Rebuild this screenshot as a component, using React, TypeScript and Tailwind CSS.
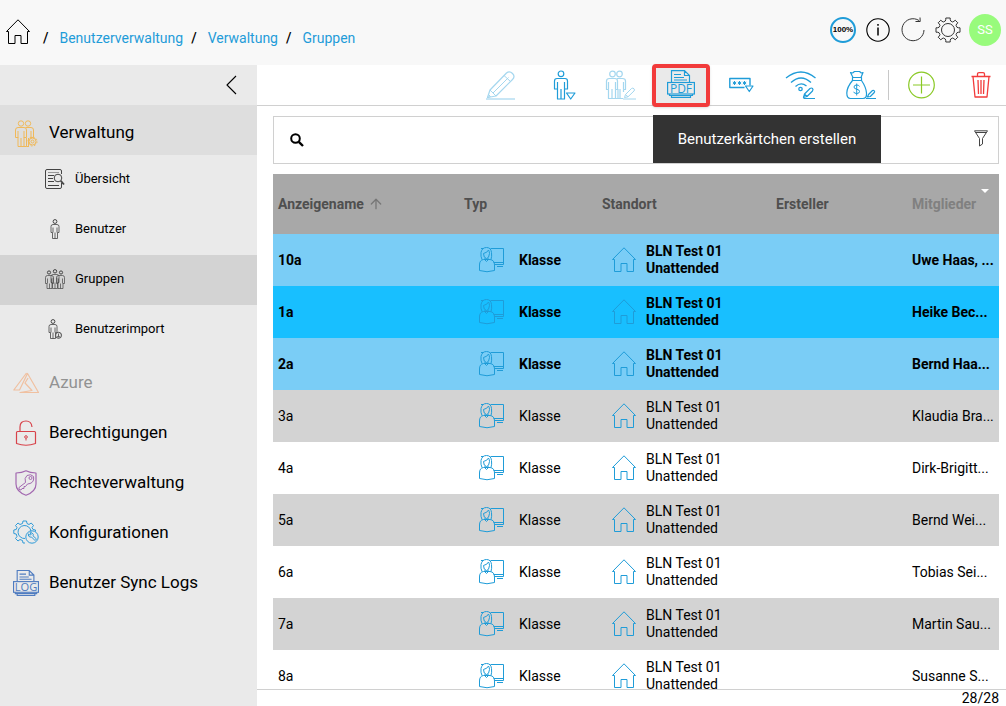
import React from "react"
import { ArrowUp } from "lucide-react"

type IconProps = { className?: string }

const Svg = ({ w, h, className = "", children }: { w: number; h: number; className?: string; children: React.ReactNode }) => (
    <svg
        width={w}
        height={h}
        viewBox={`0 0 ${w} ${h}`}
        fill="none"
        stroke="currentColor"
        strokeLinejoin="round"
        className={`shrink-0 ${className}`}
        aria-hidden="true"
    >
        {children}
    </svg>
)

const HomeIcon = ({ className }: IconProps) => (
    <Svg w={26} h={26} className={className}>
        <path d="M0.500 12.500L12 0.800L23.500 12.500H21.500V24.500H15V16.500H9V24.500H2.500V12.500Z" />
    </Svg>
)

const TeacherIcon = ({ className }: IconProps) => (
    <Svg w={26} h={26} className={className}>
        <path d="M0.500 23.500V18Q0.500 13 4.500 12.500H11Q15.500 13 15.500 18V23.500Q8 26 0.500 23.500Z" />
        <path d="M3 12.500Q1.500 9.500 2 5.500Q3 0.500 7.500 0.500Q12 0.500 12.500 5.500Q13 9.500 12 12.500" />
        <path d="M4.500 6.500Q8.500 5.500 9.500 3Q10.500 4.500 10.500 6.500Q10 11.500 7.500 11.500Q4.500 11 4.500 6.500ZM6 11V13L7.500 14.500L9 13V11" />
        <path d="M11.500 1.500H24.500V17.500H15.500M14.500 15.500H24.500M18 19.500H24M2 1.500H4" />
    </Svg>
)

const PencilIcon = ({ className }: IconProps) => (
    <Svg w={30} h={30} className={className}>
        <path d="M1.500 27.500L4 20L20.500 3Q23.500 0.500 26.500 3.500Q29.500 6.500 26.500 9.500L10 26Z" strokeWidth="1.200" />
        <path d="M4 20L10 26M7 23L22.500 7.500M18 5.500L24.500 11.500M1.500 27.500L4.500 26.500L2.500 24.500" />
        <path d="M0 29H29" strokeWidth="1.200" />
    </Svg>
)

const UserDownIcon = () => (
    <Svg w={28} h={30}>
        <circle cx="12" cy="3.800" r="2.800" strokeWidth="1.200" />
        <path d="M8 8.500H16Q18.500 8.500 18.500 11V19H15.500V29H8.500V19H5.500V11Q5.500 8.500 8 8.500ZM12 19V29M8.500 12V19M15.500 12V19" strokeWidth="1.200" />
        <path d="M17.500 23H26L21.700 29Z" className="fill-white" strokeWidth="1.200" />
    </Svg>
)

const Pair = () => (
    <>
        <circle cx="7" cy="3.500" r="2.700" />
        <circle cx="14" cy="3.500" r="2.700" />
        <path d="M4 7.500H10Q12.500 7.500 12.500 10V17.500H10V26.500H4V17.500H1.500V10Q1.500 7.500 4 7.500ZM7 18V26.500M4 11V18M10 11V18" />
        <path d="M11.500 7.500H17Q19.500 7.500 19.500 10V17.500H17V19M12.500 18V26.500H10M14.500 18V26.500M17 11V18M12.500 26.500H15" />
    </>
)

const GroupEditIcon = ({ className }: IconProps) => (
    <Svg w={32} h={30} className={className}>
        <path d="M4.500 8.500H10Q12.500 8.500 12.500 11V19.500H10.500V28.500H3.500V19.500H1.500V11Q1.500 8.500 4.500 8.500ZM7 19V28.500M3.500 12V19M10.500 12V19" strokeWidth="1.200" />
        <path d="M12 8.500H17.500Q20.500 8.500 20.500 11V19.500H18.500V22M13 19V28.500M15 19V28.500H10.500M18.500 12V19M15 28.500H18" strokeWidth="1.200" />
        <circle cx="7.500" cy="4" r="2.800" strokeWidth="1.200" />
        <circle cx="14.500" cy="4" r="2.800" strokeWidth="1.200" />
        <path d="M19.500 27.500L20.500 24.500L26.500 18.500Q28 17.500 29 18.800Q30 20 29 21L23 26.800ZM20.500 24.500L23 26.800M18 29H31" />
    </Svg>
)

const PrintIcon = ({ label, size, className = "" }: { label: string; size: number; className?: string }) => (
    <svg width={size} height={size} viewBox="0 0 28 28" fill="none" stroke="currentColor" strokeWidth="1.200" className={`shrink-0 ${className}`} aria-hidden="true">
        <path d="M4.500 12V0.600H17.500L22.500 5.500V12M17.500 0.600V5.500H22.500M7 4.500H14M7 7.500H17M7 10H20" />
        <rect x="0.600" y="12.500" width="26.800" height="11.500" />
        <path d="M2.500 24V25.500H25.500V24M4.500 25.500V27.400H23.500V25.500" />
        <text x="14" y="22.700" fontSize="12" textAnchor="middle" fill="currentColor" stroke="none" fontFamily="Open Sans, sans-serif">
            {label}
        </text>
    </svg>
)

const PasswordIcon = () => (
    <Svg w={25} h={16}>
        <path d="M15.500 10.500H0.800V1.500H21V8.500" strokeWidth="1.400" />
        <path d="M5.500 4V8M3.800 5L7.200 7M7.200 5L3.800 7M10.500 4V8M8.800 5L12.200 7M12.200 5L8.800 7M15.500 4V8M13.800 5L17.200 7M17.200 5L13.800 7" />
        <path d="M16.500 9H24L20.300 14.500Z" strokeWidth="1.200" />
    </Svg>
)

const WifiEditIcon = () => (
    <Svg w={32} h={30}>
        <path d="M1 8Q16 -4 30.500 8M6 12.500Q16 3.500 26 12.500M10.500 16.500Q16 11.500 21.500 16" strokeWidth="1.300" />
        <circle cx="15.500" cy="19" r="1.700" strokeWidth="1.300" />
        <path d="M18.500 27.500L19.500 24L25 18.500Q26.500 17.500 27.500 18.500Q28.500 19.500 27.500 21L22 26.500ZM19.500 24L22 26.500M18.500 28.500H30" strokeWidth="1.200" />
    </Svg>
)

const MoneyBagIcon = () => (
    <Svg w={31} h={30}>
        <path
            d="M7 7.500L4.500 2.500Q8 3.500 8 1.500H14Q14 3.500 17 2.500L15 7.500M6.500 7.500H15.500V10.500H6.500ZM6.500 10.500Q1 17 0.800 23Q0.800 28.500 4.500 28.500H17Q21 28.500 20.500 23Q20 17 15.500 10.500"
            strokeWidth="1.200"
        />
        <path d="M13.500 16.500Q13 15 10.700 15Q8 15 8 17Q8 18.800 10.700 19.200Q13.500 19.600 13.500 21.500Q13.500 23.500 10.700 23.500Q8 23.500 7.700 21.800M10.700 13.500V25.500" />
        <path d="M21.500 27L22.500 24.500L26.500 20.500Q27.500 20 28.300 20.800Q29 21.600 28.300 22.500L24.300 26.500ZM20 28.500H30" strokeWidth="1.200" />
    </Svg>
)

const PlusIcon = () => (
    <Svg w={28} h={28}>
        <circle cx="13.500" cy="14" r="12.800" strokeWidth="1.200" />
        <path d="M5 14H22M13.500 5.500V22.500" strokeWidth="1.200" />
    </Svg>
)

const TrashIcon = () => (
    <Svg w={20} h={26}>
        <path d="M0.500 4.500H19.500M6.500 4V2Q6.500 0.700 8 0.700H12Q13.500 0.700 13.500 2V4M2 4.500L4 25H16L18 4.500M7 8L7.500 22M10 8V22M13 8L12.500 22" strokeWidth="1.300" />
    </Svg>
)

const FilterIcon = () => (
    <Svg w={14} h={17}>
        <path d="M0.500 0.800H13.500L8.500 8.500V14L5.500 16V8.500ZM1.500 2.500H12.500" />
    </Svg>
)

const GearIcon = () => (
    <Svg w={26} h={26}>
        <circle cx="13" cy="13" r="6.500" />
        <path d="M10.300 4Q11 3 10.800 1H15.200Q15 3 15.700 4L17.700 5Q19 4.500 20.200 3.200L22.800 5.800Q21.500 7 21 8.300L22 10.300Q23 11 25 10.800V15.200Q23 15 22 15.700L21 17.700Q21.500 19 22.800 20.200L20.200 22.800Q19 21.500 17.700 21L15.700 22Q15 23 15.200 25H10.800Q11 23 10.300 22L8.300 21Q7 21.500 5.800 22.800L3.200 20.200Q4.500 19 5 17.700L4 15.700Q3 15 1 15.200V10.800Q3 11 4 10.300L5 8.300Q4.500 7 3.200 5.800L5.800 3.200Q7 4.500 8.300 5Z" />
    </Svg>
)

const InfoIcon = () => (
    <Svg w={24} h={24}>
        <circle cx="12" cy="12" r="11.200" strokeWidth="1.100" />
        <path d="M12 9.500V17.500M12 6V7.700" strokeWidth="1.500" />
    </Svg>
)

const RefreshIcon = () => (
    <Svg w={26} h={26}>
        <path d="M24 13A11 11 0 1 1 19 3.500M15.500 4.500H20.200L20 0.500" />
    </Svg>
)

const AdminIcon = () => (
    <Svg w={26} h={27} className="text-[#f0b95a]">
        <g transform="translate(1 0)">
            <Pair />
        </g>
        <circle cx="19.500" cy="21.500" r="3.500" className="fill-[#dedede]" />
        <circle cx="19.500" cy="21.500" r="1.500" />
        <circle cx="19.500" cy="21.500" r="4.500" strokeDasharray="1.800 1.700" />
    </Svg>
)

const OverviewIcon = () => (
    <Svg w={20} h={20} className="text-[#444]">
        <path d="M16.500 14V18Q16.500 19.500 15 19.500H2Q0.500 19.500 0.500 18V2Q0.500 0.500 2 0.500H15Q16.500 0.500 16.500 2V5M3 6.500H9M3 9.500H8M3 12.500H9M3 16.500H14" />
        <path d="M3 3.500H14" className="stroke-[#999]" />
        <circle cx="13" cy="9" r="3.800" />
        <path d="M15.800 11.800L19 15.500" strokeWidth="1.800" />
    </Svg>
)

const body = (x: number, y: number) =>
    `M${x - 2} ${y}H${x + 2}Q${x + 4} ${y} ${x + 4} ${y + 2}V${y + 8}H${x + 2.5}V19.500H${x - 2.5}V${y + 8}H${x - 4}V${y + 2}Q${x - 4} ${y} ${x - 2} ${y}ZM${x} ${y + 8}V19.500M${x - 2} ${y + 3}V${y + 8}M${x + 2} ${y + 3}V${y + 8}`

const UserIcon = () => (
    <Svg w={20} h={20} className="text-[#444]">
        <circle cx="10" cy="2.500" r="1.900" />
        <path d={body(10, 5.5)} strokeWidth="0.800" />
    </Svg>
)

const UsersIcon = () => (
    <Svg w={20} h={20} className="text-[#444]">
        <circle cx="4" cy="3.500" r="1.600" />
        <circle cx="16" cy="3.500" r="1.600" />
        <circle cx="10" cy="2.300" r="1.700" />
        <path d={body(4.5, 6.5)} strokeWidth="0.700" />
        <path d={body(15.5, 6.5)} strokeWidth="0.700" />
        <path d={body(10, 5.5)} strokeWidth="0.700" />
    </Svg>
)

const ImportIcon = () => (
    <Svg w={20} h={20} className="text-[#444]">
        <circle cx="8" cy="2.500" r="1.900" />
        <path d={body(8, 5.5)} strokeWidth="0.800" />
        <circle cx="13.500" cy="16.300" r="3" className="fill-[#eaeaea]" />
        <path d="M13.500 14.500V18M12 16.800L13.500 18.300L15 16.800" strokeWidth="0.800" />
    </Svg>
)

const AzureIcon = () => (
    <Svg w={26} h={22} className="text-[#f0c0a0]">
        <path d="M13.500 1L0.800 18H6.500L14.500 1.500L25.500 20.500H7L19 18.500L12 11L15 6M14.500 1.500L6.500 18" strokeWidth="1.200" />
    </Svg>
)

const LockIcon = () => (
    <Svg w={26} h={26} className="text-[#d8434b]">
        <path d="M3.500 12.500V23.500Q13 27 22.500 23.500V12.500Q22.500 11.500 21.500 11.500H4.500Q3.500 11.500 3.500 12.500ZM7 11.500V7Q7 1 13 1Q18.500 1 19 7" strokeWidth="1.200" />
        <circle cx="13" cy="17" r="1.300" />
        <path d="M13 18.500V20.500" />
    </Svg>
)

const ShieldKeyIcon = () => (
    <Svg w={26} h={26} className="text-[#a268b0]">
        <path d="M13 0.800Q17 3 23 3V14Q23 21.500 13 25.300Q3 21.500 3 14V3Q9 3 13 0.800Z" strokeWidth="1.200" />
        <path d="M12.500 12.500Q11 8 14 5.500Q18 3.500 20.500 6.500Q21.500 12 17 13.500L14.500 14L12.500 16.500L11 16.500V18.500L9 18.500L8 20L6 19.500V17.500Z" />
        <circle cx="17.500" cy="8" r="1.500" />
    </Svg>
)

const ConfigIcon = () => (
    <Svg w={26} h={26} className="text-[#2f9bd8]">
        <path d="M12 18.500A6.500 6.500 0 1 1 18 11.500M12 23H10L9.500 20.500L7 19.500L5 21L2.500 18.500L4 16.500L3.200 14L0.800 13.500V10L3.200 9.500L4 7.500L2.500 5.500L5 3L7 4.500L9.500 3.500L10 1H13.500L14 3.500L16 4.500L18.200 3L20.500 5.500L19 7.500L20 9.500L22.500 10V11.500" />
        <circle cx="19" cy="17" r="6.200" />
        <path d="M22 20.500L18.500 17Q17 17.500 15.800 16.300Q15 15 15.500 13.800L17 15.300L18.300 14L16.800 12.800Q19.500 12.200 20.300 14.300L20 15.800L23.500 19Z" />
    </Svg>
)

const tools = [
    { label: "Bearbeiten", icon: <PencilIcon />, style: "w-[60px] opacity-40" },
    { label: "Benutzer zuweisen", icon: <UserDownIcon />, style: "w-[60px] pl-1" },
    { label: "Gruppe bearbeiten", icon: <GroupEditIcon />, style: "w-[60px] opacity-40" },
    { label: "Benutzerkärtchen erstellen", icon: <PrintIcon label="PDF" size={28} />, style: "", active: true },
    { label: "Passwort", icon: <PasswordIcon />, style: "w-[60px]" },
    { label: "WLAN bearbeiten", icon: <WifiEditIcon />, style: "w-[60px]" },
    { label: "Guthaben bearbeiten", icon: <MoneyBagIcon />, style: "w-[57px] pl-1" },
]

const subItems = [
    { label: "Übersicht", icon: <OverviewIcon /> },
    { label: "Benutzer", icon: <UserIcon /> },
    { label: "Gruppen", icon: <UsersIcon />, active: true },
    { label: "Benutzerimport", icon: <ImportIcon /> },
]

const mainItems = [
    { label: "Azure", icon: <AzureIcon />, muted: true },
    { label: "Berechtigungen", icon: <LockIcon /> },
    { label: "Rechteverwaltung", icon: <ShieldKeyIcon /> },
    { label: "Konfigurationen", icon: <ConfigIcon /> },
    { label: "Benutzer Sync Logs", icon: <PrintIcon label="LOG" size={26} className="text-[#4f7cc0]" /> },
]

const rows = [
    { name: "10a", members: "Uwe Haas, ...", style: "bg-[#7acdf6] font-bold" },
    { name: "1a", members: "Heike Bec...", style: "bg-[#18bfff] font-bold" },
    { name: "2a", members: "Bernd Haa...", style: "bg-[#7acdf6] font-bold" },
    { name: "3a", members: "Klaudia Bra...", style: "bg-[#d3d3d3]" },
    { name: "4a", members: "Dirk-Brigitt...", style: "bg-white" },
    { name: "5a", members: "Bernd Wei...", style: "bg-[#d3d3d3]" },
    { name: "6a", members: "Tobias Sei...", style: "bg-white" },
    { name: "7a", members: "Martin Sau...", style: "bg-[#d3d3d3]" },
    { name: "8a", members: "Susanne S...", style: "bg-white" },
]

const Header = () => (
    <header className="flex h-[65px] shrink-0 items-center justify-between bg-[#f8f8f8] pr-[5px] pb-[2px] pl-[6px]">
        <nav className="flex items-center text-sm" aria-label="Breadcrumb">
            <a href="#home" aria-label="Start">
                <HomeIcon />
            </a>
            <ol className="flex pt-3">
                {["Benutzerverwaltung", "Verwaltung", "Gruppen"].map((crumb, i) => (
                    <li key={crumb} className="flex">
                        <span className={`font-medium ${i === 0 ? "ml-[11px]" : "ml-2"}`}>/</span>
                        <a href="#" className="ml-[11px] text-[#1f9cd8]">
                            {crumb}
                        </a>
                    </li>
                ))}
            </ol>
        </nav>
        <div className="flex items-center pb-1">
            <div className="flex items-center gap-[9px]">
                <span className="flex size-[26px] items-center justify-center rounded-full border-2 border-[#1f9cd8] font-[Liberation_Sans,sans-serif] text-[8px] font-bold">
                    100%
                </span>
                <button className="flex size-[26px] items-center justify-center" aria-label="Info">
                    <InfoIcon />
                </button>
                <button className="text-[#333]" aria-label="Aktualisieren">
                    <RefreshIcon />
                </button>
                <button className="text-[#333]" aria-label="Einstellungen">
                    <GearIcon />
                </button>
            </div>
            <button className="ml-2 size-8 rounded-full bg-[#98fb7c] text-[13px] text-white">SS</button>
        </div>
    </header>
)

const Sidebar = () => (
    <aside className="w-[257px] shrink-0 bg-[#eaeaea]">
        <div className="flex h-10 items-center justify-end pr-5">
            <button aria-label="Menü einklappen">
                <Svg w={11} h={20}>
                    <path d="M10 1L1 10L10 19" strokeWidth="1.100" />
                </Svg>
            </button>
        </div>
        <nav>
            <a href="#verwaltung" className="flex h-[50px] items-center gap-[10px] bg-[#dedede] pt-[6px] pl-[13px] text-[17px]">
                <AdminIcon />
                Verwaltung
            </a>
            {subItems.map((item) => (
                <a
                    key={item.label}
                    href="#"
                    className={`flex h-[50px] items-center gap-[10px] pb-[2px] pl-[45px] text-[13px] ${item.active ? "bg-[#d3d3d3]" : ""}`}
                >
                    {item.icon}
                    {item.label}
                </a>
            ))}
            {mainItems.map((item) => (
                <a
                    key={item.label}
                    href="#"
                    className={`flex h-[50px] items-center gap-[10px] pt-[6px] pl-[13px] text-[17px] ${item.muted ? "text-[#929292]" : ""}`}
                >
                    {item.icon}
                    {item.label}
                </a>
            ))}
        </nav>
    </aside>
)

const Toolbar = () => (
    <div className="flex h-[41px] shrink-0 items-center justify-end border-b border-[#d0d0d0] text-[#1f9cd8]">
        {tools.map((tool) =>
            tool.active ? (
                <div key={tool.label} className="relative z-10 flex w-[60px] justify-center">
                    <button
                        className="flex h-[43px] w-[58px] shrink-0 items-center justify-center rounded-[4px] border-4 border-[#f23b3b] bg-[#eaeaea] pb-[2px] shadow"
                        aria-label={tool.label}
                    >
                        {tool.icon}
                    </button>
                    <div
                        role="tooltip"
                        className="absolute top-[51px] left-[2px] flex h-12 w-[228px] items-center justify-center bg-[#333] pt-[2px] text-[15px] whitespace-nowrap text-white"
                    >
                        {tool.label}
                    </div>
                </div>
            ) : (
                <button key={tool.label} className={`flex h-full items-center justify-center ${tool.style}`} aria-label={tool.label}>
                    {tool.icon}
                </button>
            )
        )}
        <div className="flex h-[30px] border-l border-[#c8c8c8]">
            <button className="flex w-[65px] items-center justify-center text-[#8ac926]" aria-label="Hinzufügen">
                <PlusIcon />
            </button>
            <button className="flex w-[52px] items-center justify-center pl-[2px] text-[#f23b3b]" aria-label="Löschen">
                <TrashIcon />
            </button>
        </div>
    </div>
)

const GroupTable = () => (
    <table className="w-full table-fixed text-left text-sm leading-[17px]">
        <colgroup>
            <col className="w-[186px]" />
            <col className="w-[138px]" />
            <col className="w-[174px]" />
            <col className="w-[136px]" />
            <col className="w-[92px]" />
        </colgroup>
        <thead>
            <tr className="h-[60px] bg-[#a8a8a8] text-[#4f4f4f]">
                <th className="px-[5px]">
                    <span className="flex items-center gap-1">
                        Anzeigename
                        <ArrowUp size={16} className="text-[#777]" />
                    </span>
                </th>
                <th className="px-[5px]">Typ</th>
                <th className="px-[5px]">Standort</th>
                <th className="px-[5px]">Ersteller</th>
                <th className="relative px-[5px] text-[#808080]">
                    Mitglieder
                    <span className="absolute top-[15px] right-[10px] border-x-4 border-t-4 border-x-transparent border-t-white" />
                </th>
            </tr>
        </thead>
        <tbody>
            {rows.map((row) => (
                <tr key={row.name} className={`h-[52px] ${row.style}`}>
                    <td className="px-[5px]">{row.name}</td>
                    <td className="pl-5">
                        <div className="flex items-center gap-[14px]">
                            <TeacherIcon className="text-[#1f9cd8]" />
                            Klasse
                        </div>
                    </td>
                    <td className="pl-[15px]">
                        <div className="flex items-center gap-2">
                            <HomeIcon className="text-[#1f9cd8]" />
                            <span>
                                BLN Test 01
                                <br />
                                Unattended
                            </span>
                        </div>
                    </td>
                    <td />
                    <td className="overflow-hidden pl-[5px] whitespace-nowrap">{row.members}</td>
                </tr>
            ))}
        </tbody>
    </table>
)

export default function App() {
    return (
        <div className="flex h-screen flex-col overflow-hidden bg-white font-[Roboto,sans-serif] text-black">
            <Header />
            <div className="flex min-h-0 flex-1">
                <Sidebar />
                <main className="flex min-w-0 flex-1 flex-col">
                    <Toolbar />
                    <div className="flex min-h-0 flex-1 flex-col gap-[10px] overflow-hidden pt-[10px] pr-[7px] pl-4">
                        <label className="flex h-12 shrink-0 items-center gap-3 border border-[#d0d0d0] pr-[10px] pl-4">
                            <Svg w={14} h={14}>
                                <circle cx="5.500" cy="5.500" r="4.300" strokeWidth="2" />
                                <path d="M8.800 8.800L13 13" strokeWidth="2.400" />
                            </Svg>
                            <input type="text" aria-label="Suche" className="min-w-0 flex-1 text-sm outline-none" />
                            <button className="pb-1 text-[#444]" aria-label="Filter">
                                <FilterIcon />
                            </button>
                        </label>
                        <div className="min-h-0 flex-1 overflow-hidden">
                            <GroupTable />
                        </div>
                    </div>
                    <footer className="h-[17px] shrink-0 border-t border-[#d0d0d0] pr-[7px] text-right text-sm leading-[17px]">28/28</footer>
                </main>
            </div>
        </div>
    )
}
